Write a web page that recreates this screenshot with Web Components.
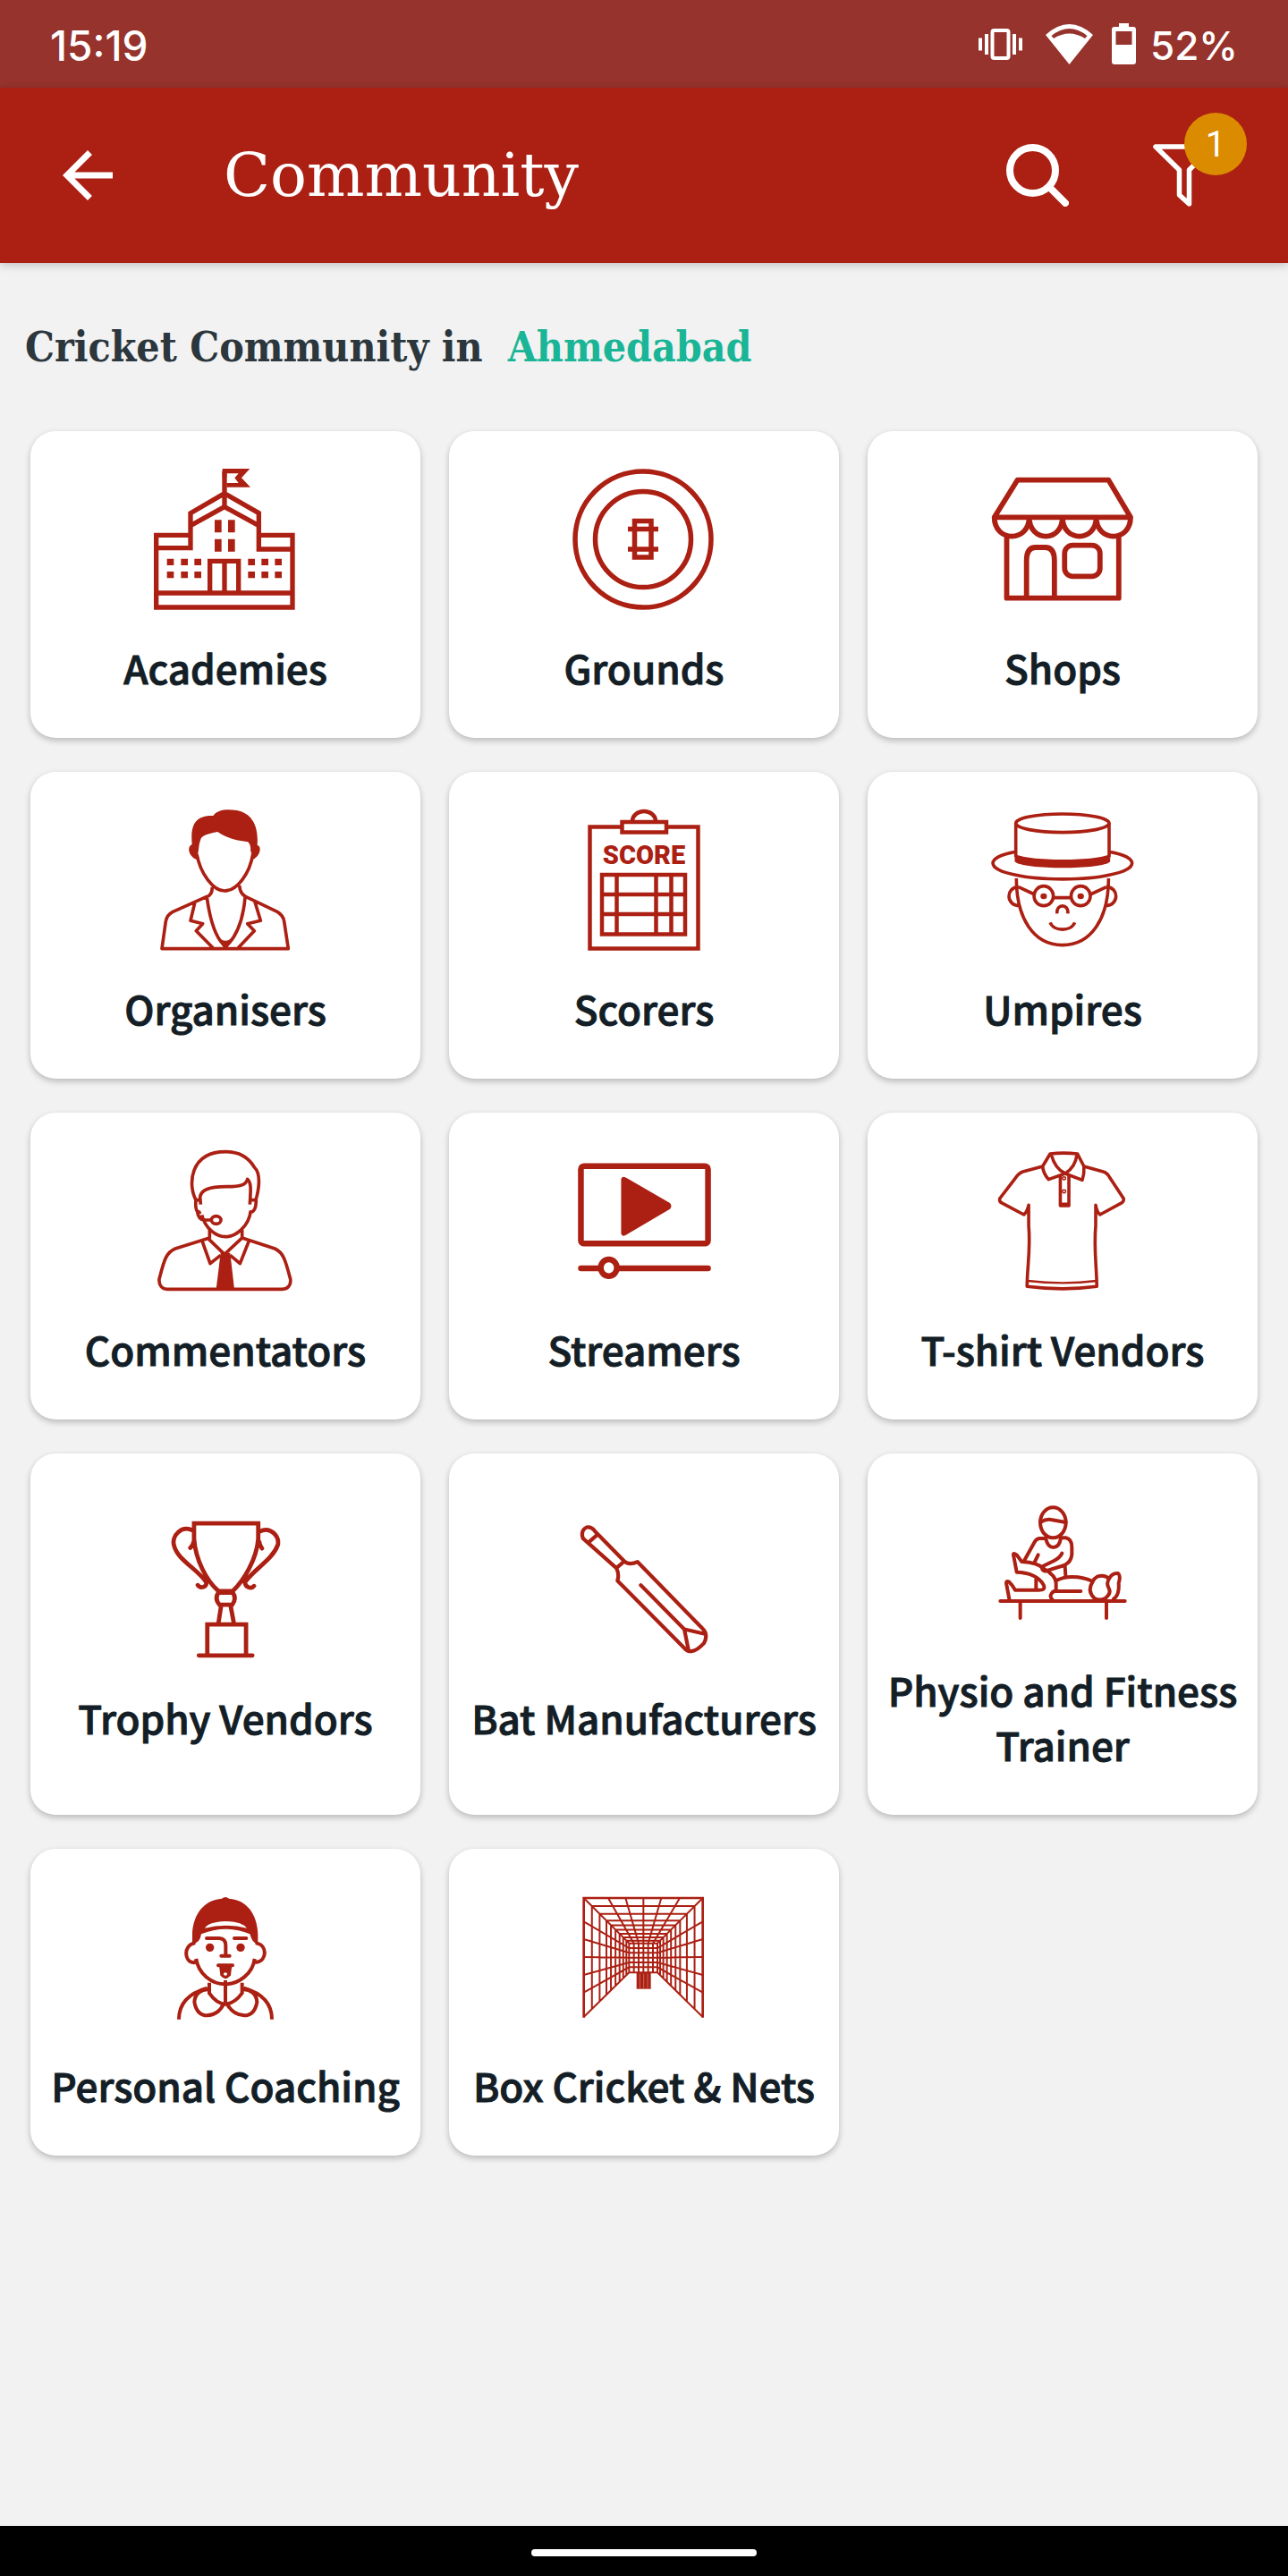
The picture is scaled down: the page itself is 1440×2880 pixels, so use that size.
<!DOCTYPE html>
<html lang="en">
<head>
<meta charset="utf-8">
<meta name="viewport" content="width=device-width, initial-scale=1">
<title>Community</title>
<style>
  :root {
    --brand: #ab2013;
    --ink: #141e26;
    --title: "Roboto Slab", "DejaVu Serif", serif;
    --heading: "Roboto Slab", "DejaVu Serif Condensed", "DejaVu Serif", serif;
    --label: "Source Sans Pro", "Noto Sans CJK SC", sans-serif;
  }
  body { margin: 0; background: #f2f2f2; }
</style>
</head>
<body>
<community-screen>
  <status-bar slot="top" time="15:19" battery="52%"></status-bar>
  <app-bar slot="top" filters="1">Community</app-bar>
  <place-heading place="Ahmedabad">Cricket Community in</place-heading>
  <category-grid>
    <category-card icon="academy">Academies</category-card>
    <category-card icon="ground">Grounds</category-card>
    <category-card icon="shop">Shops</category-card>
    <category-card icon="organiser">Organisers</category-card>
    <category-card icon="scorer">Scorers</category-card>
    <category-card icon="umpire">Umpires</category-card>
    <category-card icon="commentator">Commentators</category-card>
    <category-card icon="streamer">Streamers</category-card>
    <category-card icon="tshirt">T-shirt Vendors</category-card>
    <category-card icon="trophy">Trophy Vendors</category-card>
    <category-card icon="bat">Bat Manufacturers</category-card>
    <category-card icon="physio">Physio and Fitness Trainer</category-card>
    <category-card icon="coach">Personal Coaching</category-card>
    <category-card icon="nets">Box Cricket &amp; Nets</category-card>
  </category-grid>
  <gesture-bar slot="bottom"></gesture-bar>
</community-screen>

<script>
/* Perspective mesh of the practice net: depth rings plus lines running to the back wall. */
function netMesh() {
  const depth = [0.18, 0.35, 0.5, 0.6, 0.7, 0.79, 0.87, 0.94];
  const outerY = [295, 354, 414, 474, 533], innerY = [384, 400, 416, 432, 448];
  const outerX = [600, 658, 718, 778, 840], innerX = [686, 702, 718, 734, 750];
  let d = '';
  for (const t of depth) {
    const l = 518 + 152 * t, r = 917 - 152 * t, top = 216 + 152 * t, bottom = 615 - 149 * t;
    d += `M${l} ${bottom}V${top}H${r}V${bottom}`;
  }
  outerY.forEach((y, i) => { d += `M518 ${y}L670 ${innerY[i]}H765L917 ${y}`; });
  outerX.forEach((x, i) => { d += `M${x} 216L${innerX[i]} 368V466`; });
  return d;
}

/* Every drawing fills a 160-unit box. */
const ICONS = {
  academy: `<g transform="translate(-152 -54) scale(.33333)" stroke-width="16">
    <path d="M579 385H464V627H921V385H808M464 428H579V311L693 245L808 311V432H921M579 353L693 290L808 353M693 290V170M464 579H921M644 579V472H740V579M693 472V579"/>
    <path class="f" d="M686 162H778L750 193L780 224H700V210H740L727 193L740 178H700V190H686Z"/>
    <path class="f" d="M660 334h23v42h-23zM705 334h23v42h-23zM660 398h23v42h-23zM705 398h23v42h-23zM500 464h23v22h-23zM547 464h23v22h-23zM592 464h23v22h-23zM772 464h23v22h-23zM817 464h23v22h-23zM862 464h23v22h-23zM500 507h23v22h-23zM547 507h23v22h-23zM592 507h23v22h-23zM772 507h23v22h-23zM817 507h23v22h-23zM862 507h23v22h-23z"/></g>`,
  ground: `<g stroke-width="5.500"><circle cx="79" cy="79" r="76"/><circle cx="79" cy="79" r="53.500"/>
    <path d="M69.500 58.500H88V99H69.500ZM62 67.500H96M62 90H96"/></g>`,
  shop: `<g class="k" transform="translate(-618 -54) scale(.59952 .33333)" stroke-width="5.800" stroke-linejoin="round">
    <path d="M1080 200H1250L1291 325H1037ZM1037 325C1037 410 1102 410 1102 325C1102 410 1164 410 1164 325C1164 410 1227 410 1227 325C1227 410 1291 410 1291 325M1060 385V596H1269V385M1097 596V470Q1097 426 1114 426H1132Q1149 426 1149 470V596"/>
    <rect x="1168" y="419" width="66" height="104" rx="15" ry="27"/></g>`,
  organiser: `<g transform="translate(-152 -55) scale(.33333)" stroke-width="11" stroke-linejoin="round">
    <path class="f" d="M584 282C578 215 595 185 655 186C670 165 700 163 735 168C785 178 808 220 803 285C818 287 815 320 788 333L780 300Q783 285 772 274C730 268 700 260 670 240C650 243 625 250 615 260Q608 275 606 300L601 333C573 325 565 290 584 282Z"/>
    <path d="M600 315C612 380 655 438 693 438C735 438 778 380 788 315M652 425Q652 453 632 458L520 508Q500 518 496 540L483 632H907L893 540Q890 520 870 508L765 458Q745 448 743 420M634 460C645 540 665 600 697 625C730 595 755 540 762 460M594 475L579 538L620 548L598 572L655 630M795 475L814 538L770 548L793 572L738 630"/>
    <path class="f" d="M668 590Q697 620 726 590L700 632H692Z"/></g>`,
  scorer: `<g stroke-width="4.500"><rect x="19.500" y="19.500" width="121" height="136"/><rect x="55.500" y="14" width="49.500" height="11.500" fill="#fff"/>
    <path d="M67 13A13 11 0 0 1 93 13M33 73H126V139.500H33ZM49.500 73V139M93.500 73V139M110.500 73V139M33 95H126M33 117H126"/>
    <text x="80" y="60.500" text-anchor="middle">SCORE</text></g>`,
  umpire: `<g class="k" transform="translate(-618 -55) scale(.59952 .33333)" stroke-width="3.600">
    <ellipse cx="1164" cy="211" rx="87" ry="31"/>
    <path d="M1077 211V325M1251 211V325M1077 307C1020 325 1020 365 1077 385C1120 403 1210 403 1251 385C1308 365 1308 325 1251 307M1078 396C1078 530 1110 620 1164 620C1218 620 1250 530 1250 396M1082 425C1058 425 1058 488 1084 488M1246 425C1270 425 1270 488 1244 488M1147 461H1180M1082 425L1112 450M1246 425L1216 450M1154 514C1152 480 1176 480 1174 514M1141 544C1148 575 1180 575 1187 544"/>
    <path class="f" d="M1075 312C1090 340 1240 340 1253 312V340C1240 368 1090 368 1075 340Z"/>
    <ellipse cx="1129" cy="455" rx="18" ry="33"/><ellipse cx="1198" cy="455" rx="18" ry="33"/>
    <ellipse class="f" cx="1129" cy="456" rx="6" ry="10"/><ellipse class="f" cx="1198" cy="456" rx="6" ry="10"/></g>`,
  commentator: `<g transform="translate(-152 -56) scale(.33333)" stroke-width="11" stroke-linejoin="round">
    <path d="M597 335C570 285 575 173 697 173C745 173 775 195 793 225C815 245 810 295 798 335M613 350L611 325C615 300 640 291 700 290C745 290 765 285 770 265C785 278 780 310 778 350M594 335H611M597 335C594 365 600 380 614 375M778 335H799C799 365 790 378 778 375M617 385C628 430 665 458 696 458C730 458 775 425 781 370M601 370Q605 402 625 402H648M643 435V462L528 498C495 512 490 540 474 600C472 622 485 634 500 634H888C905 634 917 620 914 600C898 540 892 512 862 498L752 462V435M638 464L693 517L750 464M618 472L645 548L680 520M775 472L745 548L712 520"/>
    <ellipse cx="665" cy="402" rx="16" ry="13"/>
    <path class="f" d="M680 512H712L726 634H665Z"/></g>`,
  streamer: `<g class="k" transform="translate(-150 -56) scale(.59952 .33333)" stroke-width="6.500" stroke-linecap="round">
    <rect x="266" y="221" width="237" height="260" rx="6" ry="10"/>
    <path class="f" d="M341 264Q344 251 352 262L432 345Q437 355 432 365L352 450Q343 461 341 448Z"/>
    <path d="M266 564H503"/><ellipse cx="318" cy="562" rx="15" ry="28" fill="#fff"/></g>`,
  tshirt: `<g class="k" transform="translate(-618 -56) scale(.59952 .33333)" stroke-width="3.600" stroke-linejoin="round">
    <path d="M1127 222L1090 240Q1082 245 1076 262L1047 330Q1046 340 1050 344L1092 384Q1098 375 1101 352V420C1105 500 1098 560 1098 625Q1165 640 1228 625C1228 560 1222 500 1226 420V352Q1228 375 1234 384L1275 344Q1279 338 1278 330L1253 262Q1248 244 1240 240L1204 222M1141 180Q1165 175 1192 180L1204 222Q1205 245 1201 268L1169 246L1138 266Q1128 245 1127 222ZM1143 182Q1150 230 1169 246Q1188 225 1191 182M1160 252V354H1176V252M1160 349H1176"/>
    <path stroke-width="2.400" d="M1099 606Q1165 620 1228 606"/>
    <g stroke-width="1.500"><ellipse cx="1167" cy="262" rx="3" ry="5"/><ellipse cx="1167" cy="306" rx="3" ry="5"/></g></g>`,
  trophy: `<g class="k" transform="translate(-152 -87.500) scale(.59319 .33333)" stroke-width="4.800" stroke-linecap="round">
    <path d="M332 278H453V330C450 400 425 470 405 505H378C355 470 335 400 332 330ZM330 302C308 282 290 320 294 350C300 400 338 430 355 475C357 492 344 498 339 485M325 360Q331 350 331 340M455 306C476 286 493 320 490 350C480 400 446 430 428 475C428 492 440 500 445 488M460 362Q455 350 455 340M378 510Q370 530 380 551H404Q413 530 405 510ZM383 555L378 612M401 555L407 612M357 716V617H430V716M341 721H442"/></g>`,
  bat: `<g class="k" transform="translate(-620 -87.500) scale(.59319 .33333)" stroke-width="4.200" stroke-linejoin="round" stroke-linecap="round">
    <path d="M1128 428L1065 328Q1060 302 1072 291Q1082 289 1088 305L1143 405M1078 338L1092 316M1128 428L1143 405Q1152 420 1168 407L1290 630Q1302 650 1293 680Q1280 705 1270 707Q1262 708 1258 700L1130 470Q1134 450 1128 428ZM1174 485L1256 633L1293 648M1256 633L1264 703"/></g>`,
  physio: `<g transform="translate(-28 -17) scale(.33333)" stroke-width="12" stroke-linejoin="round" stroke-linecap="round">
    <ellipse cx="292" cy="157" rx="43" ry="51"/>
    <path d="M250 155Q270 143 285 147L335 156M268 210H245Q235 212 230 222L195 285M318 208H335Q355 212 355 240V265Q352 290 330 300L265 320Q250 315 258 303L295 285Q315 275 322 260M268 212Q275 240 293 240Q312 240 318 210M242 265L230 290M332 302L334 335"/>
    <path d="M187 288L170 265Q155 255 160 270L170 323Q230 325 255 358Q275 385 240 383H165Q155 365 145 356Q132 350 136 365L145 413M187 288Q240 290 262 312Q302 335 302 360V385M235 345V378M385 387H295Q275 400 290 416M302 352Q330 335 375 340Q410 345 425 355Q405 385 430 410Q445 420 465 412Q490 395 478 375Q470 360 480 345Q465 330 440 338Q430 343 425 355M480 345Q490 325 510 327Q520 335 512 360Q515 400 495 413M115 420H533M182 425V477M471 425V477"/></g>`,
  coach: `<g transform="translate(-2 -19) scale(.33333)" stroke-width="12" stroke-linecap="round">
    <path class="f" d="M135 248V215C138 150 175 102 234 98Q246 88 258 98C318 102 352 150 355 215V248Q338 252 328 217Q246 183 165 217Q160 250 135 248Z"/>
    <path fill="#fff" stroke="none" d="M177 197Q190 176 246 174Q302 176 318 197Q246 180 177 197Z"/>
    <path d="M140 248C106 255 106 310 140 313Q150 310 148 300C155 350 200 385 246 385C290 385 338 350 344 300Q342 311 352 311C386 305 386 255 352 248M183 231H225Q247 232 247 255V285M276 231H316M232 290H260M222 322H270"/>
    <circle class="f" cx="194" cy="262" r="14"/><circle class="f" cx="297" cy="262" r="14"/>
    <path class="f" d="M225 322H268L264 355Q246 378 229 355Z"/><ellipse cx="246" cy="351" rx="6" ry="5" fill="#fff" stroke="none"/>
    <path stroke-linecap="butt" d="M192 380V415Q216 450 246 452Q276 450 302 415V380M246 372V452M190 402Q145 405 142 445Q150 490 185 490Q222 488 240 452M304 402Q349 405 352 445Q344 490 309 490Q272 488 252 452M185 398Q90 425 90 503M308 398Q402 425 402 503"/></g>`,
  nets: `<g transform="translate(-160 -59) scale(.33333)" stroke-width="6">
    <path d="${netMesh()}M670 466V368H765V466ZM518 216L670 368M917 216L765 368M518 615L670 466M917 615L765 466"/>
    <path stroke-width="8" d="M518 617V216H917V617"/>
    <path class="f" d="M695 466H743V521H695Z"/><path stroke="#d98a82" stroke-width="2" d="M706 470V519M719 470V519M732 470V519"/></g>`
};

function define(name, html, setup) {
  const template = document.createElement('template');
  template.innerHTML = html;
  customElements.define(name, class extends HTMLElement {
    constructor() {
      super();
      this.attachShadow({ mode: 'open' }).append(template.content.cloneNode(true));
    }
    connectedCallback() { if (setup) setup(this, this.shadowRoot); }
  });
}

define('community-screen', `
  <style>
    :host { display: flex; flex-direction: column; min-height: 100vh; }
    main { flex: 1; padding: 0 28px 40px; }
  </style>
  <slot name="top"></slot>
  <main><slot></slot></main>
  <slot name="bottom"></slot>`);

define('status-bar', `
  <style>
    :host { display: flex; align-items: center; justify-content: space-between; height: 98px; padding: 0 56px;
      background: #96332c; color: #fff; font: 500 46px/56px "Google Sans", Inter, sans-serif; }
    div { display: flex; align-items: center; }
    time, span { padding-top: 4px; }
    span { font-size: 44px; }
    .vibrate { margin-right: 26px; }
    .wifi { margin-right: 21px; }
    .battery { margin-right: 16px; }
    svg { display: block; }
  </style>
  <time></time>
  <div>
    <svg class="vibrate" width="49" height="35" viewBox="0 0 49 35" fill="none" stroke="#fff" stroke-width="4"><rect x="15.500" y="2" width="18" height="31" rx="2"/><path d="M9 6V29M40 6V29M2 10.500V24.500M47 10.500V24.500"/></svg>
    <svg class="wifi" width="53" height="45" viewBox="0 0 53 45" fill="#fff"><path fill-rule="evenodd" d="M0 12Q26.500-12 53 12L26.500 45ZM6.500 13L9 16Q26.500 5 44 16L46.500 13Q26.500-3 6.500 13Z"/></svg>
    <svg class="battery" width="27" height="46" viewBox="0 0 27 46" fill="#fff"><path fill-rule="evenodd" d="M8 0H19V4H24Q27 4 27 7V43Q27 46 24 46H3Q0 46 0 43V7Q0 4 3 4H8ZM4.500 9V24H22.500V9Z"/></svg>
    <span></span>
  </div>`, (host, root) => {
  root.querySelector('time').textContent = host.getAttribute('time');
  root.querySelector('span').textContent = host.getAttribute('battery');
});

define('app-bar', `
  <style>
    :host { display: flex; align-items: center; height: 196px; padding: 0 81px 0 56px; background: var(--brand);
      color: #fff; box-shadow: 0 2px 10px rgba(0,0,0,.22); }
    button { all: unset; display: block; cursor: pointer; }
    svg { display: block; }
    h1 { flex: 1; margin: 0 0 0 110px; font: 400 68px/92px var(--title); }
    .filter { position: relative; margin-left: 94px; }
    .badge { position: absolute; left: 35px; top: -35px; width: 70px; height: 70px; border-radius: 50%;
      background: #db8b00; font: 400 40px/72px Roboto, sans-serif; text-align: center; }
  </style>
  <button aria-label="Back"><svg width="84" height="84" viewBox="0 0 24 24" fill="#fff"><path d="M20 11H7.830l5.590-5.590L12 4 4 12l8 8 1.410-1.410L7.830 13H20z"/></svg></button>
  <h1><slot></slot></h1>
  <button aria-label="Search"><svg width="70" height="70" viewBox="0 0 70 70" fill="none" stroke="#fff" stroke-linecap="round"><circle cx="29.500" cy="29.500" r="25.500" stroke-width="8"/><path d="M49 49L66 66" stroke-width="8"/></svg></button>
  <button class="filter" aria-label="Filter"><svg width="70" height="70" viewBox="0 0 70 70" fill="none" stroke="#fff" stroke-width="5.500" stroke-linejoin="round"><path d="M3 3H67L40.500 29V67L29.500 57V29Z"/></svg><span class="badge"></span></button>`,
(host, root) => { root.querySelector('.badge').textContent = host.getAttribute('filters'); });

define('place-heading', `
  <style>
    :host { display: flex; align-items: center; gap: 28px; height: 188px; font: 700 46px/64px var(--heading); color: #2b363d; }
    h2 { margin: 0; font: inherit; }
    a { color: #19b596; text-decoration: none; }
  </style>
  <h2><slot></slot></h2><a href="#place"></a>`, (host, root) => {
  root.querySelector('a').textContent = host.getAttribute('place');
});

define('category-grid', `
  <style>
    :host { display: grid; grid-template-columns: repeat(3, minmax(0, 1fr)); gap: 38px 32px; padding: 0 6px; }
  </style>
  <slot></slot>`);

define('category-card', `
  <style>
    :host { display: flex; }
    a { flex: 1; display: flex; flex-direction: column; align-items: center; justify-content: center; gap: 32px;
      padding: 42px 14px 48px; border-radius: 28px; background: #fff; box-shadow: 0 3px 7px rgba(0,0,0,.24);
      color: var(--ink); text-decoration: none; text-align: center; font: 500 44px/61px var(--label);
      -webkit-text-stroke: 1px var(--ink); }
  </style>
  <a><category-icon></category-icon><span><slot></slot></span></a>`, (host, root) => {
  const icon = host.getAttribute('icon');
  root.querySelector('a').href = '#' + icon;
  root.querySelector('category-icon').setAttribute('name', icon);
});

define('category-icon', `
  <style>
    :host { display: block; width: 160px; height: 160px; -webkit-text-stroke: 0; }
    svg { display: block; overflow: visible; fill: none; stroke: var(--brand); }
    .f { fill: var(--brand); stroke: none; }
    .k * { vector-effect: non-scaling-stroke; }
    text { font: 900 29px Roboto, sans-serif; fill: var(--brand); stroke: none; }
  </style>
  <svg width="160" height="160" viewBox="0 0 160 160" aria-hidden="true"></svg>`, (host, root) => {
  root.querySelector('svg').innerHTML = ICONS[host.getAttribute('name')] || '';
});

define('gesture-bar', `
  <style>
    :host { display: flex; justify-content: center; align-items: center; height: 56px; background: #000; }
    i { width: 252px; height: 8px; border-radius: 4px; margin-top: 4px; background: #fff; }
  </style>
  <i></i>`);
</script>
</body>
</html>
